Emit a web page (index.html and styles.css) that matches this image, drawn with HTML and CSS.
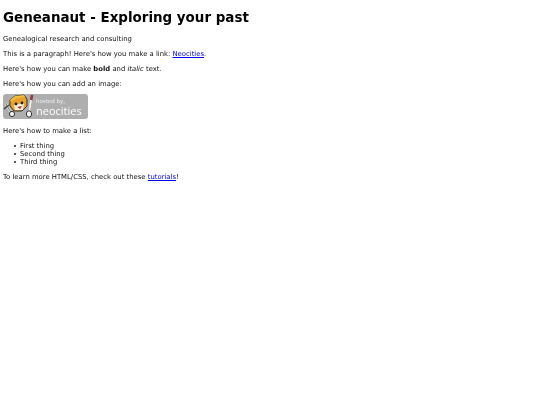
FILE: index.html
```html
<!DOCTYPE html>
<html lang="en">
<head>
<meta charset="utf-8">
<title>Geneanaut</title>
<link rel="stylesheet" href="styles.css">
</head>
<body>
<h1 class="title">Geneanaut - Exploring your past</h1>
<p>Genealogical research and consulting</p>
<p>This is a paragraph! Here's how you make a link: <a href="#">Neocities</a>.</p>
<p>Here's how you can make <strong>bold</strong> and <em>italic</em> text.</p>
<p>Here's how you can add an image:</p>
<div class="badge">
  <svg class="mascot" width="33" height="25" viewBox="0 0 33 25">
    <path d="M7 6 L12 2 L21 1 L24 5 L24 12 L19 17 L11 17 L7 12 Z" fill="#e8a02e" stroke="#3a3128" stroke-width="1"/>
    <path d="M7 6 L12 2 L21 1 L22 3 L14 4 L8 8 Z" fill="#f0bf3c"/>
    <path d="M11 11 L21 9 L20 16 L12 16 Z" fill="#f7efdc"/>
    <circle cx="13" cy="10" r="1.400" fill="#222"/>
    <circle cx="19" cy="9" r="1.400" fill="#222"/>
    <path d="M14 13 L19 12 L17 15 Z" fill="#a33"/>
    <path d="M28 6 L26 19" stroke="#f5f5f0" stroke-width="1.600"/>
    <path d="M29 1 L28.200 6" stroke="#8d3b3b" stroke-width="2.600"/>
    <ellipse cx="26" cy="20" rx="2.600" ry="3.200" fill="#f5f5f0" stroke="#333"/>
    <path d="M3 10 L9 20" stroke="#f0f0f0" stroke-width="2.400"/>
    <path d="M1 15 L6 11" stroke="#444" stroke-width="1.600"/>
    <path d="M3 10 L9 20" stroke="#444" stroke-width="0.800"/>
    <circle cx="9" cy="20" r="2.600" fill="#f5f5f0" stroke="#333"/>
  </svg>
  <span class="badge-text"><span class="hosted">hosted by,</span><span class="neo">neocities</span></span>
</div>
<p>Here's how to make a list:</p>
<ul>
  <li>First thing</li>
  <li>Second thing</li>
  <li>Third thing</li>
</ul>
<p>To learn more HTML/CSS, check out these <a href="#">tutorials</a>!</p>
</body>
</html>
```
FILE: styles.css
```css
html { background: #fff; }
body {
  margin: 3px;
  font-family: "DejaVu Sans", sans-serif;
  font-size: 6.85px;
  line-height: 8px;
  color: #111;
  filter: blur(0.3px);
}
.title {
  margin: 7px 0 10px;
  font-size: 13.45px;
  line-height: 15px;
  color: #000;
}
p { margin: 7px 0; }
a { color: #0000ee; }
ul {
  margin: 7px 0;
  padding-left: 10.5px;
  list-style: none;
}
li {
  display: flex;
  align-items: center;
  gap: 4.5px;
}
li::before {
  content: "";
  width: 2px;
  height: 2px;
  border-radius: 50%;
  background: #222;
}
.badge {
  width: 85px;
  height: 25px;
  margin: -1px 0 8px;
  background: #aeaeae;
  border-radius: 3px;
  display: flex;
  align-items: center;
  overflow: hidden;
}
.mascot { flex: none; }
.badge-text { display: flex; flex-direction: column; color: #fff; }
.hosted { font-size: 5.5px; line-height: 7px; color: #eee; }
.neo { font-size: 11px; line-height: 11px; font-family: "Open Sans", sans-serif; }
```
